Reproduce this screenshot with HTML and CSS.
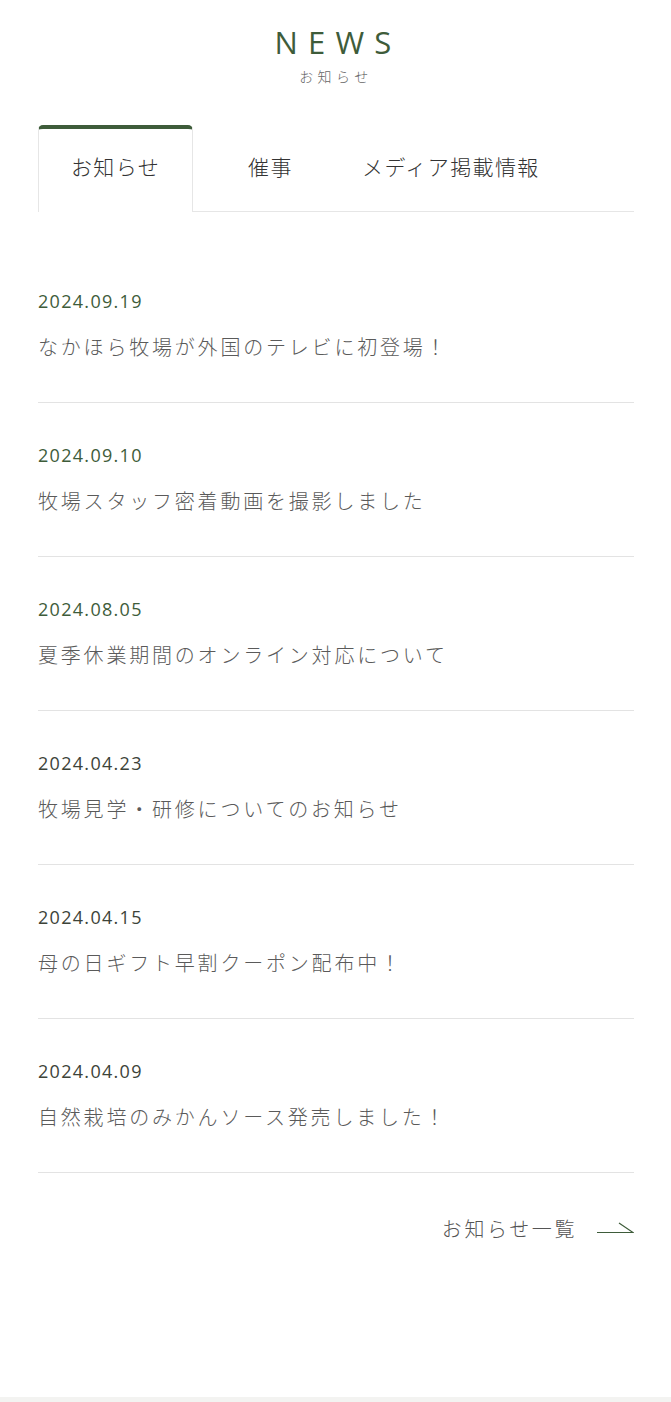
FILE: index.html
```html
<!DOCTYPE html>
<html lang="ja">
  <head>
    <meta charset="UTF-8" />
    <meta name="viewport" content="width=device-width, initial-scale=1.0" />
    <title>NEWS お知らせ</title>
    <link rel="stylesheet" href="styles.css">
  </head>
  <body>
    <section id="news">
      <div class="head">
        <h2>NEWS</h2>
        <p>お知らせ</p>
      </div>

      <ul class="tabs">
        <li class="tab active">お知らせ</li>
        <li class="tab">催事</li>
        <li class="tab">メディア掲載情報</li>
      </ul>

      <ul class="list">
        <li class="item">
          <p class="date">2024.09.19</p>
          <p class="title">なかほら牧場が外国のテレビに初登場！</p>
        </li>
        <li class="item">
          <p class="date">2024.09.10</p>
          <p class="title">牧場スタッフ密着動画を撮影しました</p>
        </li>
        <li class="item">
          <p class="date">2024.08.05</p>
          <p class="title">夏季休業期間のオンライン対応について</p>
        </li>
        <li class="item">
          <p class="date dark">2024.04.23</p>
          <p class="title">牧場見学・研修についてのお知らせ</p>
        </li>
        <li class="item">
          <p class="date dark">2024.04.15</p>
          <p class="title">母の日ギフト早割クーポン配布中！</p>
        </li>
        <li class="item">
          <p class="date dark">2024.04.09</p>
          <p class="title">自然栽培のみかんソース発売しました！</p>
        </li>
      </ul>

      <div class="more">
        <a href="#">お知らせ一覧
          <svg width="37" height="12" viewBox="0 0 37 12">
            <path d="M0 10.5H36L22 1" fill="none" stroke="#3e5c3a" stroke-width="1.2" />
          </svg>
        </a>
      </div>
    </section>
    <footer></footer>
  </body>
</html>
```

FILE: styles.css
```css
* {
  padding: 0;
  margin: 0;
  box-sizing: border-box;
}
body {
  background: #fff;
  font-family: "Noto Sans CJK JP", sans-serif;
  color: #555;
}
ul {
  list-style: none;
}
#news {
  padding: 24px 37px 0 38px;
  height: 1397px;
}
.head {
  text-align: center;
}
.head h2 {
  font-family: "Open Sans", sans-serif;
  font-weight: 400;
  font-size: 31px;
  line-height: 36px;
  letter-spacing: 0.33em;
  padding-left: 0.13em;
  color: #3e5c3a;
}
.head p {
  font-size: 14px;
  line-height: 20px;
  letter-spacing: 4.5px;
  color: #666;
  font-weight: 300;
  margin-top: 6px;
}

.tabs {
  display: flex;
  margin-top: 39px;
  border-bottom: 1px solid #e6e6e6;
}
.tab {
  min-width: 155px;
  padding: 0 14px;
  text-align: center;
  height: 86px;
  line-height: 74px;
  font-size: 21px;
  letter-spacing: 1.4px;
  font-weight: 300;
  color: #333;
  border-top: 4px solid transparent;
}
.tab.active {
  border: 1px solid #e6e6e6;
  border-top: 4px solid #3e5c3a;
  border-radius: 5px 5px 0 0;
  border-bottom: none;
  background: #fff;
  margin-bottom: -1px;
  height: 87px;
  width: 155px;
  padding: 0;
}

.list {
  margin-top: 37px;
}
.item {
  padding: 38px 0 40px;
  border-bottom: 1px solid #e3e3e3;
}
.date {
  font-family: "Open Sans", sans-serif;
  font-size: 18px;
  line-height: 28px;
  font-weight: 500;
  letter-spacing: 1.3px;
  color: #3e5c3a;
}
.date.dark {
  color: #3d4339;
}
.title {
  margin-top: 17px;
  font-size: 20px;
  line-height: 30px;
  letter-spacing: 2.8px;
  font-weight: 300;
  color: #5a5a5a;
}

.more {
  display: flex;
  justify-content: flex-end;
  margin-top: 41px;
}
.more a {
  display: flex;
  align-items: center;
  gap: 20px;
  font-size: 20px;
  line-height: 30px;
  letter-spacing: 2.6px;
  font-weight: 300;
  color: #555;
  text-decoration: none;
}
.more svg {
  margin-top: -2px;
}
footer {
  height: 5px;
  background: #f3f3f1;
}
```
